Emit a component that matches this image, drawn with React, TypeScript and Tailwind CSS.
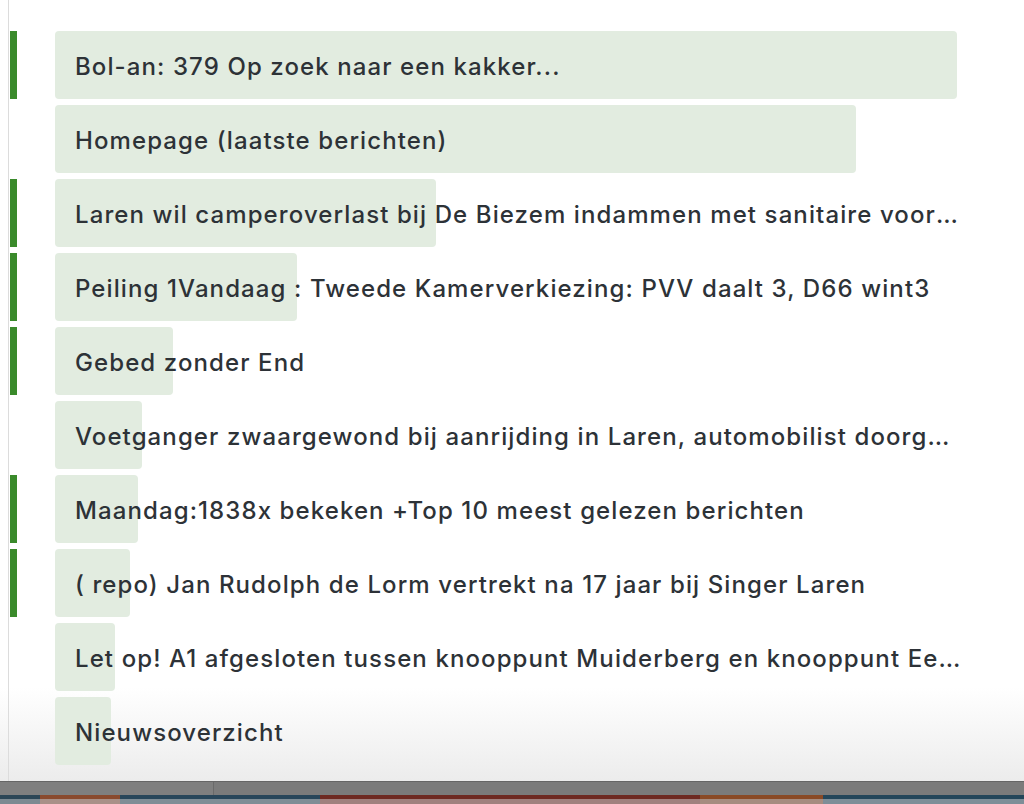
import type { CSSProperties } from 'react';

type Item = {
    title: string;
    width: number;
    active: boolean;
};

const ITEMS: Item[] = [
    { title: 'Bol-an: 379 Op zoek naar een kakker...', width: 902, active: true },
    { title: 'Homepage (laatste berichten)', width: 801, active: false },
    { title: 'Laren wil camperoverlast bij De Biezem indammen met sanitaire voorzieningen', width: 381, active: true },
    { title: 'Peiling 1Vandaag : Tweede Kamerverkiezing: PVV daalt 3, D66 wint3', width: 242, active: true },
    { title: 'Gebed zonder End', width: 118, active: true },
    { title: 'Voetganger zwaargewond bij aanrijding in Laren, automobilist doorgereden', width: 87, active: false },
    { title: 'Maandag:1838x bekeken +Top 10 meest gelezen berichten', width: 83, active: true },
    { title: '( repo) Jan Rudolph de Lorm vertrekt na 17 jaar bij Singer Laren', width: 75, active: true },
    { title: 'Let op! A1 afgesloten tussen knooppunt Muiderberg en knooppunt Eemnes', width: 60, active: false },
    { title: 'Nieuwsoverzicht', width: 56, active: false },
];

// strip of desktop wallpaper peeking out under the window
const WALLPAPER = [
    { w: 40, top: '#2c4656', bottom: '#7d8a92' },
    { w: 80, top: '#8a4a2e', bottom: '#a99088' },
    { w: 200, top: '#28465a', bottom: '#7f8d96' },
    { w: 380, top: '#6e2a22', bottom: '#a0807e' },
    { w: 123, top: '#8a4a26', bottom: '#a68c80' },
    { w: 201, top: '#24465a', bottom: '#7e8e98' },
];

function Row({ item }: { item: Item }) {
    const barStyle: CSSProperties = { width: item.width };

    return (
        <div className="flex h-[68px] items-stretch">
            <div className={`ml-px w-[7px] ${item.active ? 'bg-[#3a8a2b]' : ''}`} />
            <div className="ml-[38px] grid w-[906px] items-center">
                <div className="col-start-1 row-start-1 h-full rounded-[4px] bg-[#e2ece0]" style={barStyle} />
                <span className="col-start-1 row-start-1 truncate pl-5 pt-[3px] text-[24px] font-medium leading-[32px] tracking-[1.1px] text-[#2d3237]">
                    {item.title}
                </span>
            </div>
        </div>
    );
}

export default function App() {
    return (
        <main
            className="flex h-[804px] w-[1024px] flex-col overflow-hidden bg-white"
            style={{ fontFamily: 'Inter, "Liberation Sans", sans-serif' }}
        >
            <div className="flex-1 bg-[linear-gradient(to_bottom,#ffffff_88%,#ececec)]">
                <div className="ml-2 flex h-full flex-col gap-[6px] border-l border-[#dcdcdc] pt-[31px]">
                    {ITEMS.map((item) => (
                        <Row key={item.title} item={item} />
                    ))}
                </div>
            </div>

            <div className="flex h-[14px] border-t border-[#666666] bg-[#7b7b7b]">
                <div className="w-[214px] border-r border-[#6a6a6a] bg-[#7f7f7f]" />
                <div className="flex-1" />
            </div>

            <div className="flex h-[9px]">
                {WALLPAPER.map((seg, i) => (
                    <div key={i} className="flex flex-col" style={{ width: seg.w }}>
                        <div className="h-[4px]" style={{ background: seg.top }} />
                        <div className="flex-1" style={{ background: seg.bottom }} />
                    </div>
                ))}
            </div>
        </main>
    );
}
